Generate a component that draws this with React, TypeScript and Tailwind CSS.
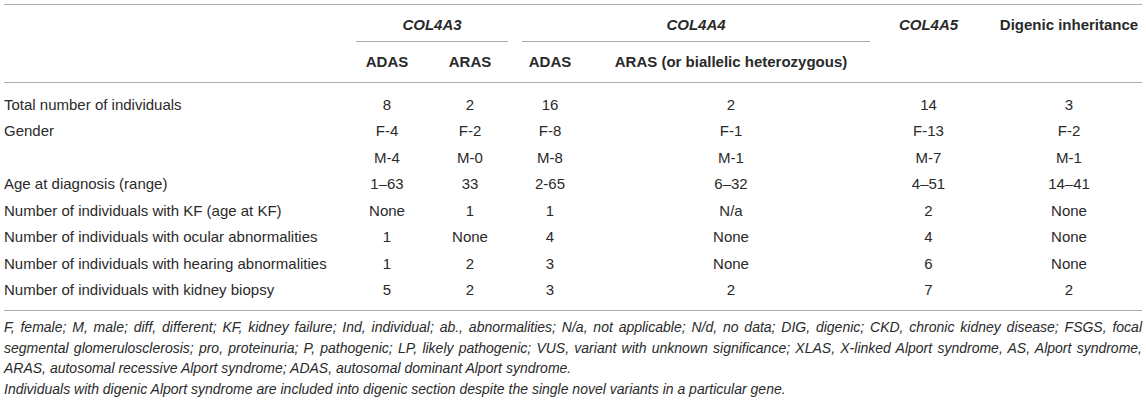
import React from 'react';

const line = 'border-[#acacac]';

const rows: string[][] = [
  ['Total number of individuals', '8', '2', '16', '2', '14', '3'],
  ['Gender', 'F-4', 'F-2', 'F-8', 'F-1', 'F-13', 'F-2'],
  ['', 'M-4', 'M-0', 'M-8', 'M-1', 'M-7', 'M-1'],
  ['Age at diagnosis (range)', '1–63', '33', '2-65', '6–32', '4–51', '14–41'],
  ['Number of individuals with KF (age at KF)', 'None', '1', '1', 'N/a', '2', 'None'],
  ['Number of individuals with ocular abnormalities', '1', 'None', '4', 'None', '4', 'None'],
  ['Number of individuals with hearing abnormalities', '1', '2', '3', 'None', '6', 'None'],
  ['Number of individuals with kidney biopsy', '5', '2', '3', '2', '7', '2'],
];

export default function App() {
  return (
    <div className="bg-white px-[4px] pt-[4px] font-['Liberation_Sans',Arial,sans-serif] text-[#2a2a2a]">
      <table className="w-full table-fixed border-collapse text-[15px]">
        <colgroup>
          <col className="w-[345px]" />
          <col className="w-[76px]" />
          <col className="w-[90px]" />
          <col className="w-[70px]" />
          <col className="w-[292px]" />
          <col className="w-[103px]" />
          <col className="w-[162px]" />
        </colgroup>
        <thead className={`border-t border-b ${line}`}>
          <tr>
            <th rowSpan={2} className="p-0" />
            <th colSpan={2} className="p-0 pt-[11px] align-top font-bold">
              <div className="italic leading-[18px]">COL4A3</div>
              <div className={`mx-[7px] mt-[7px] border-b ${line}`} />
            </th>
            <th colSpan={2} className="p-0 pt-[11px] align-top font-bold">
              <div className="italic leading-[18px]">COL4A4</div>
              <div className={`mx-[7px] mt-[7px] border-b ${line}`} />
            </th>
            <th rowSpan={2} className="p-0 pt-[11px] align-top font-bold italic leading-[18px]">
              COL4A5
            </th>
            <th rowSpan={2} className="p-0 pt-[11px] pl-[16px] align-top font-bold leading-[18px] whitespace-nowrap">
              Digenic inheritance
            </th>
          </tr>
          <tr>
            <th className="p-0 pt-[11px] pb-[11px] font-bold leading-[18px]">ADAS</th>
            <th className="p-0 pt-[11px] pb-[11px] font-bold leading-[18px]">ARAS</th>
            <th className="p-0 pt-[11px] pb-[11px] font-bold leading-[18px]">ADAS</th>
            <th className="p-0 pt-[11px] pb-[11px] font-bold leading-[18px] whitespace-nowrap">
              ARAS (or biallelic heterozygous)
            </th>
          </tr>
        </thead>
        <tbody className={`border-b ${line}`}>
          <tr>
            <td colSpan={7} className="h-[9px] p-0" />
          </tr>
          {rows.map((r, i) => (
            <tr key={i} className="leading-[26.5px]">
              <td className="p-0 text-left whitespace-nowrap">{r[0]}</td>
              {r.slice(1).map((c, j) => (
                <td key={j} className={`p-0 text-center ${j === 5 ? 'pl-[16px]' : ''}`}>
                  {c}
                </td>
              ))}
            </tr>
          ))}
          <tr>
            <td colSpan={7} className="h-[7px] p-0" />
          </tr>
        </tbody>
      </table>
      <div className="pt-[6px] text-[14px] italic leading-[20.5px]">
        <p className="text-justify">
          F, female; M, male; diff, different; KF, kidney failure; Ind, individual; ab., abnormalities; N/a, not
          applicable; N/d, no data; DIG, digenic; CKD, chronic kidney disease; FSGS, focal segmental
          glomerulosclerosis; pro, proteinuria; P, pathogenic; LP, likely pathogenic; VUS, variant with unknown
          significance; XLAS, X-linked Alport syndrome, AS, Alport syndrome, ARAS, autosomal recessive Alport
          syndrome; ADAS, autosomal dominant Alport syndrome.
        </p>
        <p>
          Individuals with digenic Alport syndrome are included into digenic section despite the single novel
          variants in a particular gene.
        </p>
      </div>
    </div>
  );
}
